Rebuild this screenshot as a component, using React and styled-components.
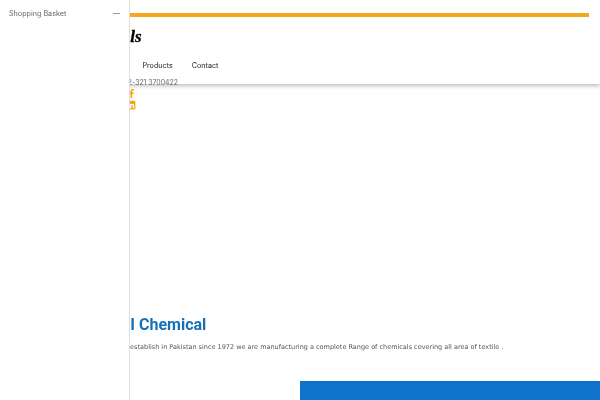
import styled, { createGlobalStyle } from 'styled-components'
import { FaFacebookF, FaLinkedin } from 'react-icons/fa'

const GlobalStyle = createGlobalStyle`
  html, body {
    margin: 0;
    padding: 0;
    height: 400px;
    overflow: hidden;
    background: #fff;
  }
`

const App = () => {
  return (
    <Page>
      <GlobalStyle />
      <Drawer>
        <DrawerTitle>Shopping Basket</DrawerTitle>
        <CloseLine />
      </Drawer>
      <Header>
        <TopBar />
        <Logo>Chemicals</Logo>
        <Nav>
          <NavItem>Home</NavItem>
          <NavItem>About</NavItem>
          <NavItem>Products</NavItem>
          <NavItem>Contact</NavItem>
        </Nav>
      </Header>
      <ContactBlock>
        <Phone>+92-321 3700422</Phone>
        <Social>
          <FaFacebookF size={9} />
        </Social>
        <Social>
          <FaLinkedin size={10} />
        </Social>
      </ContactBlock>
      <Intro>
        <Heading>SCI Chemical</Heading>
        <Text>
          We establish in Pakistan since 1972 we are manufacturing a complete
          Range of chemicals covering all area of textile .
        </Text>
      </Intro>
      <BlueBlock />
    </Page>
  )
}

export default App

// the reference is soft all over, as if scaled down from a larger capture
const Page = styled.div`
  position: relative;
  width: 600px;
  height: 400px;
  overflow: hidden;
  background: #fff;
  filter: blur(0.3px);
`

const Drawer = styled.aside`
  position: absolute;
  top: 0;
  left: 0;
  bottom: 0;
  z-index: 10;
  width: 130px;
  box-sizing: border-box;
  padding: 9px 9px 0 9px;
  display: flex;
  align-items: flex-start;
  justify-content: space-between;
  background: #fff;
  border-right: 1px solid #dedede;
`

const DrawerTitle = styled.div`
  font-family: 'Inter', sans-serif;
  font-size: 7.2px;
  line-height: 10px;
  color: #666;
`

const CloseLine = styled.div`
  width: 7px;
  height: 1px;
  margin: 4px 0 0;
  background: #999;
`

const Header = styled.header`
  position: relative;
  height: 84px;
  box-sizing: border-box;
  padding: 13px 11px 0 0;
  background: #fff;
  box-shadow: 0 2px 4px rgba(0, 0, 0, 0.25);
`

const TopBar = styled.div`
  height: 4px;
  background: #f6a61c;
`

const Logo = styled.div`
  margin: 9px 0 0 68px;
  font-family: 'Liberation Serif', serif;
  font-style: italic;
  font-weight: 700;
  font-size: 17px;
  line-height: 22px;
  color: #000;
  -webkit-text-stroke: 0.3px #000;
`

const Nav = styled.nav`
  display: flex;
  gap: 19px;
  margin: 12px 0 0 64px;
`

const NavItem = styled.div`
  font-family: 'Inter', sans-serif;
  font-size: 7.2px;
  line-height: 12px;
  color: #222;
`

const ContactBlock = styled.div`
  position: relative;
  z-index: 1;
  margin: -5px 0 0 100px;
`

const Phone = styled.div`
  font-family: 'Inter', sans-serif;
  font-size: 6.9px;
  line-height: 8px;
  color: #666;
  margin-left: 19px;
`

const Social = styled.div`
  display: flex;
  justify-content: flex-end;
  width: 36px;
  height: 12px;
  align-items: center;
  color: #f6a61c;
`

const Intro = styled.section`
  margin: 204px 0 0 90px;
`

const Heading = styled.h2`
  margin: 0;
  padding-left: 20px;
  font-family: 'Roboto', sans-serif;
  font-weight: 700;
  font-size: 16px;
  line-height: 20px;
  color: #1670b8;
`

const Text = styled.p`
  margin: 6px 0 0;
  padding-left: 28px;
  font-family: 'DejaVu Sans', sans-serif;
  font-size: 6.5px;
  line-height: 12px;
  color: #555;
  white-space: nowrap;
`

const BlueBlock = styled.div`
  height: 40px;
  margin: 28px 0 0 300px;
  background: #0f73cc;
`
